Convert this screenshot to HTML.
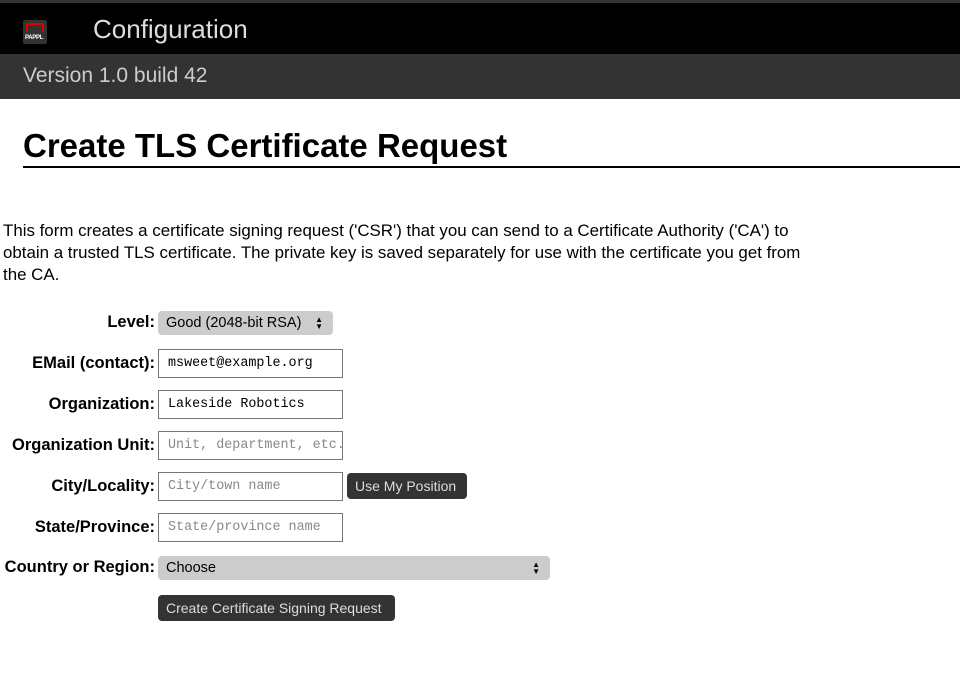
<!DOCTYPE html>
<html><head><style>
body{margin:0;background:#fff;font-family:"Liberation Sans",sans-serif;color:#000;width:960px;height:679px;overflow:hidden;position:relative}
.top{position:absolute;left:0;top:0;width:960px;height:3px;background:#333}
.hdr{position:absolute;left:0;top:3px;width:960px;height:51px;background:#000}
.hdr .t{position:absolute;left:93px;top:11px;font-size:26px;color:#ddd}
.logo{position:absolute;left:23px;top:17px;width:24px;height:24px;background:#333;border-radius:2px}
.logo .r{position:absolute;left:3px;top:3px;width:18px;height:9px;border:2px solid #d00;border-bottom:none;box-sizing:border-box}
.logo .p{position:absolute;left:2px;top:15px;font-size:6px;font-weight:bold;color:#fff;letter-spacing:-.3px}
.ver{position:absolute;left:0;top:54px;width:960px;height:45px;background:#333}
.ver span{position:absolute;left:23px;top:10px;font-size:21px;color:#ccc}
h1{position:absolute;left:23px;top:127px;margin:0;font-size:33px;font-weight:bold;white-space:nowrap}
.hr{position:absolute;left:23px;top:166px;width:937px;height:2px;background:#000}
p{position:absolute;left:3px;top:220px;margin:0;width:805px;font-size:16.9px;line-height:22px}
.lab{position:absolute;right:805px;font-size:16.5px;font-weight:bold;white-space:nowrap}
.in{position:absolute;left:158px;border:1px solid #777;font-family:"Liberation Mono",monospace;font-size:13.4px;line-height:28px;padding-left:9px;box-sizing:border-box;width:185px;height:29px;white-space:nowrap;overflow:hidden}
.ph{color:#888}
.sel{position:absolute;left:158px;height:24px;background:#ccc;border-radius:4px;font-size:14.5px;line-height:25px;padding-left:8px;box-sizing:border-box}
.sel i{position:absolute;right:10px;top:0;font-style:normal;font-size:8px;line-height:7px;padding-top:5px}
.btn{position:absolute;height:26px;background:#333;color:#ddd;border-radius:4px;font-size:14px;line-height:27px;padding:0 8px;box-sizing:border-box;white-space:nowrap}
</style></head><body>
<div class="top"></div>
<div class="hdr"><div class="logo"><div class="r"></div><div class="p">PAPPL</div></div><div class="t">Configuration</div></div>
<div class="ver"><span>Version 1.0 build 42</span></div>
<h1>Create TLS Certificate Request</h1>
<div class="hr"></div>
<p>This form creates a certificate signing request ('CSR') that you can send to a Certificate Authority ('CA') to obtain a trusted TLS certificate. The private key is saved separately for use with the certificate you get from the CA.</p>
<div class="lab" style="top:313px">Level:</div>
<div class="sel" style="top:311px;width:175px">Good (2048-bit RSA)<i>▲<br>▼</i></div>
<div class="lab" style="top:354px">EMail (contact):</div>
<div class="in" style="top:349px">msweet@example.org</div>
<div class="lab" style="top:395px">Organization:</div>
<div class="in" style="top:390px">Lakeside Robotics</div>
<div class="lab" style="top:436px">Organization Unit:</div>
<div class="in ph" style="top:431px">Unit, department, etc.</div>
<div class="lab" style="top:477px">City/Locality:</div>
<div class="in ph" style="top:472px">City/town name</div>
<div class="btn" style="left:347px;top:473px;width:120px">Use My Position</div>
<div class="lab" style="top:518px">State/Province:</div>
<div class="in ph" style="top:513px">State/province name</div>
<div class="lab" style="top:558px">Country or Region:</div>
<div class="sel" style="top:556px;width:392px">Choose<i>▲<br>▼</i></div>
<div class="btn" style="left:158px;top:595px;width:237px">Create Certificate Signing Request</div>
</body></html>
